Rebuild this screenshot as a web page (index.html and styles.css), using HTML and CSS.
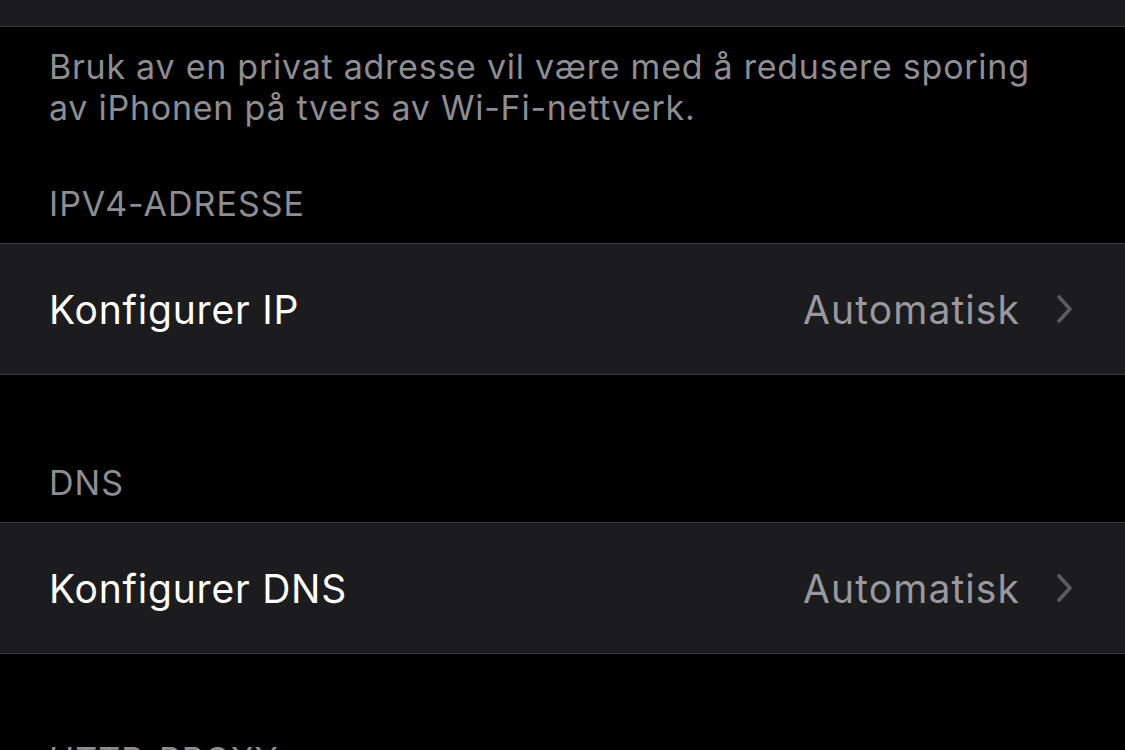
FILE: index.html
```html
<!DOCTYPE html>
<html lang="no">
<head>
<meta charset="utf-8">
<link rel="stylesheet" href="styles.css">
</head>
<body>
<div class="screen">
  <div class="group group-top"></div>
  <p class="footer">Bruk av en privat adresse vil være med å redusere sporing av iPhonen på tvers av Wi-Fi-nettverk.</p>

  <div class="section section-first">
    <div class="header">IPV4-ADRESSE</div>
    <div class="group">
      <div class="row">
        <span class="title">Konfigurer IP</span>
        <span class="value">Automatisk</span>
        <svg class="chevron" viewBox="0 0 18 30" width="18" height="30"><path d="M3 3 L14 15 L3 27" fill="none" stroke="currentColor" stroke-width="3.6" stroke-linecap="round" stroke-linejoin="round"/></svg>
      </div>
    </div>
  </div>

  <div class="section section-dns">
    <div class="header">DNS</div>
    <div class="group">
      <div class="row">
        <span class="title">Konfigurer DNS</span>
        <span class="value">Automatisk</span>
        <svg class="chevron" viewBox="0 0 18 30" width="18" height="30"><path d="M3 3 L14 15 L3 27" fill="none" stroke="currentColor" stroke-width="3.6" stroke-linecap="round" stroke-linejoin="round"/></svg>
      </div>
    </div>
  </div>

  <div class="section section-proxy">
    <div class="header">HTTP-PROXY</div>
  </div>
</div>
</body>
</html>
```
FILE: styles.css
```css
html, body {
  margin: 0;
  padding: 0;
  background: #000;
}
.screen {
  width: 1125px;
  height: 750px;
  overflow: hidden;
  font-family: Inter, "Noto Sans", sans-serif;
  -webkit-font-smoothing: antialiased;
}
.group {
  background: #1c1c1e;
  border-top: 1px solid #3a3a3c;
  border-bottom: 1px solid #3a3a3c;
}
.group-top {
  height: 26px;
  border-top: none;
}
.footer {
  margin: 0;
  padding: 19px 50px 0 49px;
  font-size: 34px;
  line-height: 41px;
  letter-spacing: 0.75px;
  color: #8d8d92;
}
.section-first {
  margin-top: 55px;
}
.section-dns {
  margin-top: 87px;
}
.section-proxy {
  margin-top: 85px;
}
.header {
  padding: 0 49px;
  font-size: 34px;
  line-height: 41px;
  letter-spacing: 1px;
  color: #8d8d92;
  margin-bottom: 19px;
}
.row {
  height: 130px;
  display: flex;
  align-items: center;
  padding: 0 51px 0 49px;
}
.title {
  flex: 1;
  font-size: 39px;
  letter-spacing: 0.8px;
  color: #fff;
}
.value {
  font-size: 39px;
  letter-spacing: 1.1px;
  color: #98989e;
  margin-right: 36px;
}
.chevron {
  color: #5c5c60;
}
```
